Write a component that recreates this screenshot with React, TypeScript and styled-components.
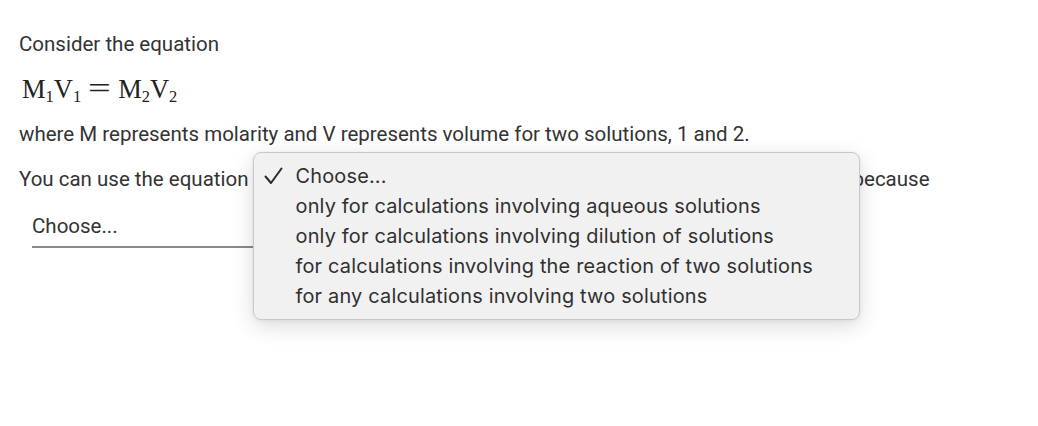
import styled, { createGlobalStyle } from 'styled-components';

const GlobalStyle = createGlobalStyle`
  html, body {
    margin: 0;
    padding: 0;
    background: #ffffff;
  }
  body {
    font-family: Roboto, "Liberation Sans", sans-serif;
    color: #333333;
  }
`;

const options = [
  'Choose...',
  'only for calculations involving aqueous solutions',
  'only for calculations involving dilution of solutions',
  'for calculations involving the reaction of two solutions',
  'for any calculations involving two solutions',
];

export default function App() {
  return (
    <>
      <GlobalStyle />
      <Page>
        <Text>Consider the equation</Text>
        <Equation>
          M<Sub>1</Sub>V<Sub>1</Sub>
          <Op>=</Op>
          M<Sub>2</Sub>V<Sub>2</Sub>
        </Equation>
        <Text $gap={19}>
          where M represents molarity and V represents volume for two solutions, 1 and 2.
        </Text>
        <Line>
          <span>You can use the equation</span>
          <InlineSelect>
            <Menu>
              {options.map((opt, i) => (
                <MenuItem key={opt}>
                  <Check>{i === 0 ? <CheckIcon /> : null}</Check>
                  {opt}
                </MenuItem>
              ))}
            </Menu>
          </InlineSelect>
          <span>because</span>
        </Line>
        <Select>Choose...</Select>
      </Page>
    </>
  );
}

function CheckIcon() {
  return (
    <svg width="19" height="18" viewBox="0 0 19 18" fill="none">
      <path
        d="M1.5 9.5 L7 16 L17.5 1.5"
        stroke="#2a2a2a"
        strokeWidth="2"
        strokeLinecap="round"
        strokeLinejoin="round"
      />
    </svg>
  );
}

const Page = styled.div`
  min-height: 100vh;
  padding: 31px 19px 0;
  box-sizing: border-box;
  font-size: 20.5px;
  line-height: 27px;
`;

const Text = styled.p<{ $gap?: number }>`
  margin: ${(p) => p.$gap ?? 0}px 0 0;
`;

const Equation = styled.div`
  margin: 16px 0 0 3px;
  height: 28px;
  font-family: "Liberation Serif", "DejaVu Serif", serif;
  font-size: 26.5px;
  line-height: 28px;
  color: #222;
`;

const Sub = styled.sub`
  font-size: 16.5px;
  vertical-align: -4px;
  line-height: 0;
`;

const Op = styled.span`
  display: inline-block;
  margin: 0 10px;
  font-size: 30px;
  transform: scaleX(1.35);
`;

const Line = styled.div`
  margin-top: 18px;
  display: flex;
  align-items: center;
`;

const InlineSelect = styled.span`
  position: relative;
  display: inline-block;
  width: 582px;
  height: 27px;
  margin: 0 2px 0 20px;
`;

const Menu = styled.div`
  position: absolute;
  left: -16px;
  top: -14px;
  width: 607px;
  box-sizing: border-box;
  padding: 8px 0;
  background: #f1f1f1;
  border: 1px solid #c9c9c9;
  border-radius: 8px;
  box-shadow: 0 6px 22px rgba(0, 0, 0, 0.14), 0 1px 4px rgba(0, 0, 0, 0.06);
  z-index: 10;
`;

const MenuItem = styled.div`
  display: flex;
  align-items: center;
  height: 30px;
  font-family: Inter, "Noto Sans", sans-serif;
  font-size: 19.9px;
  letter-spacing: 0.2px;
  color: #303030;
`;

const Check = styled.span`
  display: flex;
  align-items: center;
  width: 42px;
  padding-left: 10px;
  box-sizing: border-box;
`;

const Select = styled.div`
  margin: 18px 0 0 13px;
  width: 300px;
  padding: 2px 0 6px;
  border-bottom: 2px solid #8a8a8a;
`;
